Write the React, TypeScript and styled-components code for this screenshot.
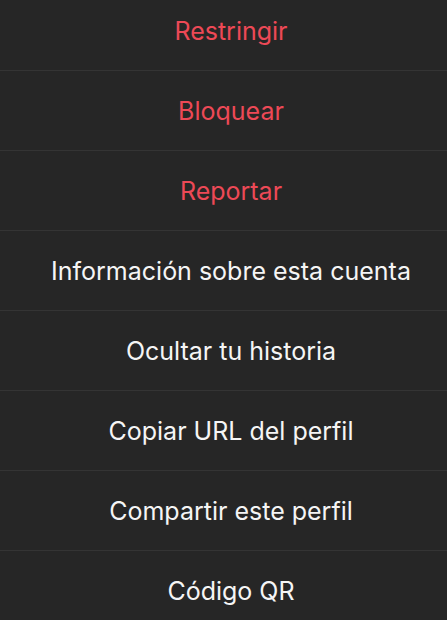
import React from 'react';
import styled, { createGlobalStyle } from 'styled-components';

const GlobalStyle = createGlobalStyle`
    html, body {
        margin: 0;
        padding: 0;
        background: #262626;
    }
`;

const Sheet = styled.div`
    display: flex;
    flex-direction: column;
    margin-top: -9px;
    padding-left: 15px;
    background: #262626;
    font-family: Inter, "Liberation Sans", sans-serif;
`;

const Option = styled.button<{ $danger?: boolean }>`
    height: 80px;
    display: flex;
    align-items: center;
    justify-content: center;
    border: none;
    border-bottom: 1px solid #343434;
    margin-left: -15px;
    padding: 1px 0 0 15px;
    background: transparent;
    color: ${({ $danger }) => ($danger ? '#ed4956' : '#f5f5f5')};
    font-family: inherit;
    font-size: 25px;
    font-weight: 400;
`;

const options = [
    { label: 'Restringir', danger: true },
    { label: 'Bloquear', danger: true },
    { label: 'Reportar', danger: true },
    { label: 'Información sobre esta cuenta' },
    { label: 'Ocultar tu historia' },
    { label: 'Copiar URL del perfil' },
    { label: 'Compartir este perfil' },
    { label: 'Código QR' },
];

const App = () => (
    <>
        <GlobalStyle />
        <Sheet>
            {options.map((o) => (
                <Option key={o.label} $danger={o.danger}>{o.label}</Option>
            ))}
        </Sheet>
    </>
);

export default App;
